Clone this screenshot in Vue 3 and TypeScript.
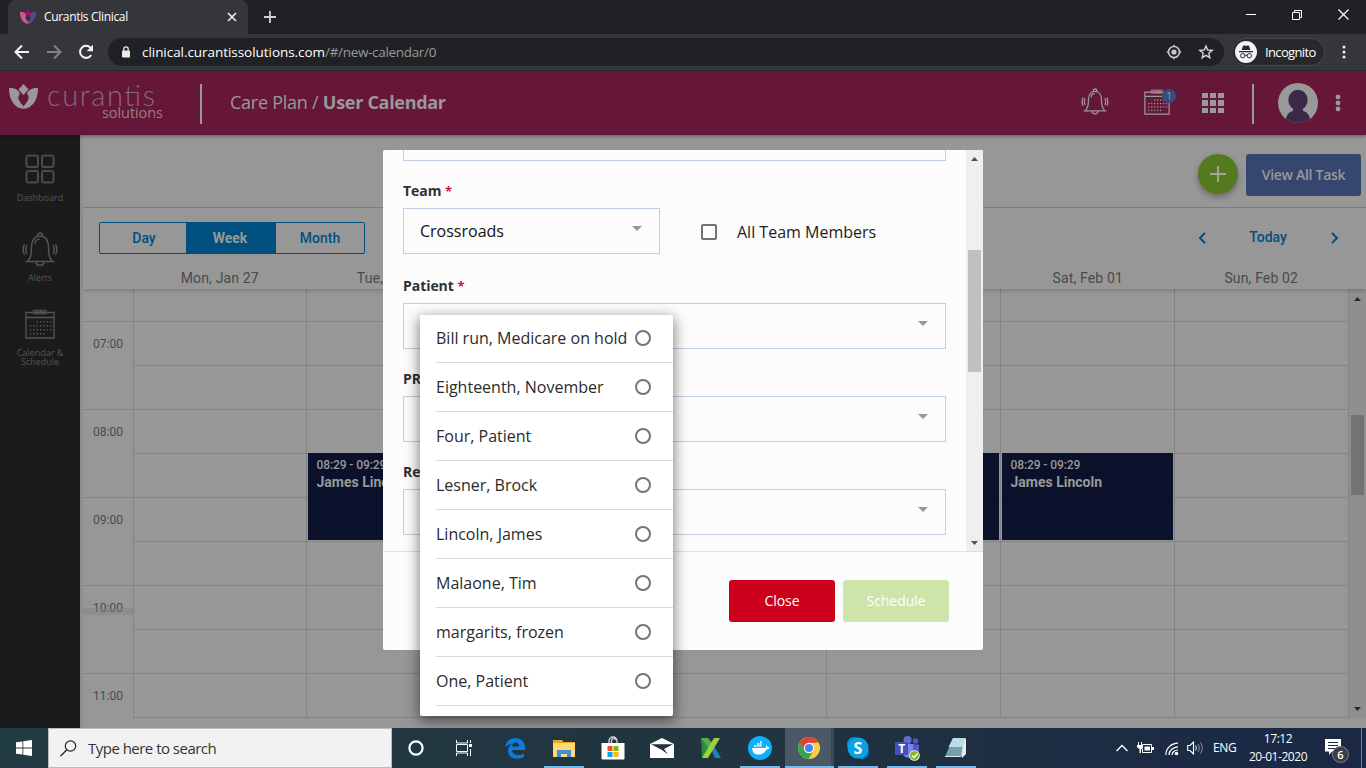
<script setup lang="ts">
interface CalendarEvent {
  day: number
  time: string
  name: string
}

const days: string[] = ['Mon, Jan 27', 'Tue, Jan 28', 'Wed, Jan 29', 'Thu, Jan 30', 'Fri, Jan 31', 'Sat, Feb 01', 'Sun, Feb 02']
const hours: string[] = ['07:00', '08:00', '09:00', '10:00', '11:00']
const events: CalendarEvent[] = [1, 4, 5].map((day) => ({ day, time: '08:29 - 09:29', name: 'James Lincoln' }))
const patients: string[] = [
  'Bill run, Medicare on hold',
  'Eighteenth, November',
  'Four, Patient',
  'Lesner, Brock',
  'Lincoln, James',
  'Malaone, Tim',
  'margarits, frozen',
  'One, Patient',
]
const eventOn = (day: number): CalendarEvent | undefined => events.find((e) => e.day === day)
const dotRows: number[][] = [[3, 4, 5, 6, 7], [1, 2, 3, 4, 5, 6, 7], [1, 2, 3, 4, 5, 6, 7], [1, 2, 3, 4, 5]]
</script>

<template>
  <div class="screen">
    <div class="tabstrip">
      <div class="tab">
        <svg class="favicon" width="16" height="14" viewBox="0 0 16 14">
          <path d="M0 2c4-.5 6 1 6.300 3.500C5 7 5 9 8 11.500V14C3 13 0 9 0 2z" fill="#d4588c" />
          <path d="M16 2c-4-.5-6 1-6.300 3.500C11 7 11 9 8 11.500V14c5-1 8-5 8-12z" fill="#5c4583" />
          <path d="M8 0l3 3-3 3-3-3z" fill="#c0006a" />
        </svg>
        <span class="tab-title">Curantis Clinical</span>
        <svg class="tab-close" width="10" height="10" viewBox="0 0 10 10"><path d="M1 1l8 8M9 1l-8 8" stroke="#e8eaed" stroke-width="1.7" /></svg>
      </div>
      <svg class="newtab" width="12" height="12" viewBox="0 0 12 12"><path d="M6 0v12M0 6h12" stroke="#ced0d3" stroke-width="1.8" /></svg>
      <div class="window-controls">
        <svg width="10" height="11" viewBox="0 0 10 11"><path d="M0 5.500h10" stroke="#fff" /></svg>
        <svg width="10" height="10" viewBox="0 0 10 10"><path d="M.5 2.500h7v7h-7zM2.500 2.500v-2h7v7h-2" fill="none" stroke="#fff" /></svg>
        <svg width="11" height="11" viewBox="0 0 11 11"><path d="M.5.5l10 10M10.500.5l-10 10" stroke="#fff" stroke-width="1.200" /></svg>
      </div>
    </div>

    <div class="toolbar">
      <svg class="nav-icon" width="16" height="16" viewBox="0 0 16 16"><path d="M15 8H2M8 1.500L1.500 8 8 14.500" fill="none" stroke="#f1f3f4" stroke-width="2" /></svg>
      <svg class="nav-icon" width="16" height="16" viewBox="0 0 16 16"><path d="M1 8h13M8 1.500L14.500 8 8 14.500" fill="none" stroke="#808386" stroke-width="2" /></svg>
      <svg class="nav-icon" width="16" height="16" viewBox="0 0 16 16">
        <path d="M13.200 11A6 6 0 1 1 12.500 3.800" fill="none" stroke="#f1f3f4" stroke-width="2" />
        <path d="M15 .8v6.400H8.600z" fill="#f1f3f4" />
      </svg>
      <div class="omnibox">
        <svg width="10" height="12" viewBox="0 0 10 12"><rect x="1" y="4.500" width="8" height="7" rx="1" fill="#e8eaed" /><path d="M2.800 5V3a2.200 2.200 0 0 1 4.400 0v2" fill="none" stroke="#e8eaed" stroke-width="1.300" /></svg>
        <span class="url"><b>clinical.curantissolutions.com</b>/#/new-calendar/0</span>
        <svg class="omni-target" width="16" height="16" viewBox="0 0 16 16">
          <circle cx="8" cy="8" r="5.500" fill="none" stroke="#c5c7ca" stroke-width="1.600" /><circle cx="8" cy="8" r="2.600" fill="#c5c7ca" />
          <path d="M8 .8v2M8 13.200v2M.8 8h2M13.200 8h2" stroke="#c5c7ca" stroke-width="1.500" />
        </svg>
        <svg width="16" height="16" viewBox="0 0 16 16"><path d="M8 2l1.700 4 4.500.4-3.400 2.900 1 4.400L8 11.400l-3.800 2.300 1-4.400L1.800 6.400 6.300 6z" fill="none" stroke="#d3d5d8" stroke-width="1.400" /></svg>
      </div>
      <div class="incognito">
        <svg width="22" height="22" viewBox="0 0 22 22">
          <circle cx="11" cy="11" r="11" fill="#f1f3f4" />
          <path d="M4 10h14v1.200H4zM6.500 9l1.700-4.500h1.600L11 5l1.200-.5h1.600L15.500 9z" fill="#2a2b2e" />
          <circle cx="7.700" cy="14.700" r="2.200" fill="none" stroke="#2a2b2e" /><circle cx="14.300" cy="14.700" r="2.200" fill="none" stroke="#2a2b2e" /><path d="M9.800 14.300h2.400" stroke="#2a2b2e" />
        </svg>
        <span>Incognito</span>
      </div>
      <svg class="menu-dots" width="4" height="14" viewBox="0 0 4 14"><circle cx="2" cy="2" r="1.500" fill="#f1f3f4" /><circle cx="2" cy="7" r="1.500" fill="#f1f3f4" /><circle cx="2" cy="12" r="1.500" fill="#f1f3f4" /></svg>
    </div>

    <div class="page">
      <header class="app-header">
        <svg class="logo" width="160" height="44" viewBox="0 0 160 44">
          <path d="M0 4c6-.5 10 2 11 6-3 2-2 7 3.500 12v3C6 24 0 17 0 4z" fill="#999" />
          <path d="M29 4c-6-.5-10 2-11 6 3 2 2 7-3.500 12v3C23 24 29 17 29 4z" fill="#999" />
          <path d="M14.500 0l5 5.500-5 5.500-5-5.500z" fill="#999" />
          <text x="38" y="22" class="logo-name" textLength="108">curantis</text>
          <text x="93" y="34" class="logo-sub" textLength="61">solutions</text>
        </svg>
        <div class="rule"></div>
        <h1>Care Plan / <b>User Calendar</b></h1>
        <svg class="hd-bell" width="26" height="28" viewBox="0 0 34 36">
          <g fill="none" stroke="#999" stroke-width="1.700">
            <path d="M4 29.500c4-3 4.500-7 4.500-14C8.500 8 12 4 17 4s8.500 4 8.500 11.500c0 7 .5 11 4.500 14zM13 30.500c1 4 7 4 8 0M14.500 4c0-4 5-4 5 0M12 12c0-3 2-5 4.500-5M4 13c-1.300 3-1.300 6 0 9M1.200 12c-1.300 3.500-1.300 7.500 0 11M30 13c1.300 3 1.300 6 0 9M32.800 12c1.300 3.500 1.300 7.500 0 11" />
          </g>
        </svg>
        <div class="hd-cal">
          <svg width="26" height="26" viewBox="0 0 30 30">
            <path d="M1 3.500h28V29H1zM1 8.500h28" fill="none" stroke="#999" stroke-width="1.400" />
            <g fill="none" stroke="#999" stroke-width="1"><circle v-for="n in 5" :key="n" :cx="7 + n * 2.600" cy="3" r="2" /></g>
            <g fill="#999"><template v-for="(row, r) in dotRows" :key="r"><rect v-for="c in row" :key="c" :x="1.400 + c * 3.400" :y="12 + r * 4" width="1.500" height="1.500" /></template></g>
          </svg>
          <span class="count">1</span>
        </div>
        <div class="hd-grid"><i v-for="n in 9" :key="n"></i></div>
        <div class="rule rule-right"></div>
        <svg class="avatar" width="40" height="40" viewBox="0 0 40 40">
          <defs><clipPath id="face"><circle cx="20" cy="20" r="20" /></clipPath></defs>
          <g clip-path="url(#face)"><rect width="40" height="40" fill="#999" /><ellipse cx="20" cy="17" rx="9.700" ry="10.300" fill="#3a2947" /><path d="M15 24h10v4c5 1 7 5 8 12H7c1-7 3-11 8-12z" fill="#3a2947" /></g>
        </svg>
        <svg class="hd-dots" width="6" height="18" viewBox="0 0 6 18"><circle cx="3" cy="3" r="2.400" fill="#999" /><circle cx="3" cy="9" r="2.400" fill="#999" /><circle cx="3" cy="15" r="2.400" fill="#999" /></svg>
      </header>

      <div class="workspace">
        <nav class="sidebar">
          <div class="side-item">
            <svg width="30" height="30" viewBox="0 0 30 30"><g fill="none" stroke="#4b4b4b" stroke-width="2"><rect x="1.500" y="1.500" width="11.500" height="11.500" rx="2" /><rect x="17" y="1.500" width="11.500" height="11.500" rx="2" /><rect x="1.500" y="17" width="11.500" height="11.500" rx="2" /><rect x="17" y="17" width="11.500" height="11.500" rx="2" /></g></svg>
            <span>Dashboard</span>
          </div>
          <div class="side-item alerts">
            <svg width="36" height="36" viewBox="0 0 36 36">
              <path d="M5 29.500c4-3 4.500-7 4.500-14C9.500 8 13 4 18 4s8.500 4 8.500 11.500c0 7 .5 11 4.500 14zM14 30.500c1 4 7 4 8 0M15.500 4c0-4 5-4 5 0M13 12c0-3 2-5 4.500-5M5 13c-1.500 3-1.500 6 0 9M2.500 12c-1.700 3.500-1.700 7.500 0 11M31 13c1.500 3 1.500 6 0 9M33.500 12c1.700 3.500 1.700 7.500 0 11" fill="none" stroke="#555" stroke-width="1.500" />
            </svg>
            <span>Alerts</span>
          </div>
          <div class="side-item schedule">
            <svg width="30" height="30" viewBox="0 0 30 30">
              <path d="M1 3.500h28V29H1zM1 8.500h28" fill="none" stroke="#555" stroke-width="1.300" />
              <g fill="none" stroke="#555" stroke-width="1"><circle v-for="n in 5" :key="n" :cx="7 + n * 2.600" cy="3" r="2" /></g>
              <g fill="#555"><template v-for="(row, r) in dotRows" :key="r"><rect v-for="c in row" :key="c" :x="1.400 + c * 3.400" :y="12 + r * 4" width="1.500" height="1.500" /></template></g>
            </svg>
            <span>Calendar &amp;<br />Schedule</span>
          </div>
        </nav>

        <main class="content">
          <div class="action-bar">
            <button class="add"><svg width="16" height="16" viewBox="0 0 16 16"><path d="M8 0v16M0 8h16" stroke="#a3a39d" stroke-width="2" /></svg></button>
            <button class="view-all">View All Task</button>
          </div>
          <div class="cal-head">
            <div class="cal-nav">
              <div class="segments"><span>Day</span><span class="on">Week</span><span>Month</span></div>
              <svg class="prev" width="8" height="12" viewBox="0 0 8 12"><path d="M7 1L2 6l5 5" fill="none" stroke="#00507f" stroke-width="2" /></svg>
              <b>Today</b>
              <svg width="8" height="12" viewBox="0 0 8 12"><path d="M1 1l5 5-5 5" fill="none" stroke="#00507f" stroke-width="2" /></svg>
            </div>
            <div class="day-names"><span v-for="d in days" :key="d">{{ d }}</span></div>
          </div>
          <div class="cal-body">
            <div class="times">
              <div class="stub"></div>
              <div v-for="h in hours" :key="h" class="hour">{{ h }}</div>
              <div class="now"></div>
            </div>
            <div class="columns">
              <div v-for="(d, i) in days" :key="d" class="column">
                <div class="stub"></div>
                <div v-for="n in 9" :key="n" class="half"></div>
                <div v-if="eventOn(i)" class="event"><span>{{ eventOn(i)?.time }}</span><b>{{ eventOn(i)?.name }}</b></div>
              </div>
            </div>
            <div class="cal-scroll">
              <svg width="7" height="4" viewBox="0 0 7 4"><path d="M0 4l3.500-4L7 4z" fill="#2c2c2c" /></svg>
              <div class="thumb"></div>
              <svg width="7" height="4" viewBox="0 0 7 4"><path d="M0 0l3.500 4L7 0z" fill="#2c2c2c" /></svg>
            </div>
          </div>
        </main>
      </div>

      <section class="modal">
        <div class="modal-body">
          <div class="form">
            <div class="field cut"></div>
            <div class="label">Team <em>*</em></div>
            <div class="row">
              <div class="field team"><span>Crossroads</span><i class="caret"></i></div>
              <i class="checkbox"></i>
              <span class="check-label">All Team Members</span>
            </div>
            <div class="label patient">Patient <em>*</em></div>
            <div class="field"><i class="caret"></i></div>
            <div class="label">PR</div>
            <div class="field"><i class="caret"></i></div>
            <div class="label">Re</div>
            <div class="field"><i class="caret"></i></div>
          </div>
          <div class="modal-scroll">
            <svg width="7" height="4" viewBox="0 0 7 4"><path d="M0 4l3.500-4L7 4z" fill="#505050" /></svg>
            <div class="thumb"></div>
            <svg width="7" height="4" viewBox="0 0 7 4"><path d="M0 0l3.500 4L7 0z" fill="#505050" /></svg>
          </div>
        </div>
        <footer class="modal-foot">
          <button class="close">Close</button>
          <button class="submit">Schedule</button>
        </footer>
      </section>

      <div class="popover">
        <div v-for="p in patients" :key="p" class="option"><span>{{ p }}</span><i></i></div>
      </div>
    </div>

    <div class="taskbar">
      <div class="start"><svg width="16" height="16" viewBox="0 0 16 16"><path d="M0 2.300L6.500 1.400v6.100H0zM7.300 1.200L16 0v7.500H7.300zM0 8.400h6.500v6.200L0 13.700zM7.300 8.400H16V16l-8.700-1.200z" fill="#fff" /></svg></div>
      <div class="search">
        <svg width="17" height="17" viewBox="0 0 17 17"><circle cx="10.500" cy="6" r="5.200" fill="none" stroke="#222" stroke-width="1.200" /><path d="M6.800 9.800L.5 16.300" stroke="#222" stroke-width="1.300" /></svg>
        <span>Type here to search</span>
      </div>
      <div class="slot"><svg width="16" height="16" viewBox="0 0 16 16"><circle cx="8" cy="8" r="6.600" fill="none" stroke="#fff" stroke-width="2.200" /></svg></div>
      <div class="slot"><svg width="16" height="16" viewBox="0 0 16 16"><path d="M.5 0v3h11V0M.5 16v-3h11v3M.5 4.500h11v7H.5zM14.500 0v3M14.500 9v7" fill="none" stroke="#fff" /><rect x="13" y="4" width="3" height="3" fill="#fff" /></svg></div>
      <div class="apps">
        <div class="app"><svg width="20" height="22" viewBox="0 0 20 22"><path d="M0 10C1 4 5 1 10 1c6 0 10 4 10 9v3H7c0 3 3 5 6 5 2 0 4-.5 6-1.500V20c-2 1-4.500 1.700-7 1.700-5 0-9-3-9-8 0-3 1.500-5 4-6.500C4.500 7.500 2 8 0 10zm7-.5h7C14 7 13 5.500 10.800 5.500S7.500 7 7 9.500z" fill="#0d7ad9" fill-rule="evenodd" /></svg></div>
        <div class="app open"><svg width="22" height="19" viewBox="0 0 22 19"><path d="M0 1h9l1.500 2H22v15H0z" fill="#e9a820" /><path d="M0 4h22v14H0z" fill="#ffd975" /><path d="M4 18v-7h14v7h-4v-3H8v3z" fill="#3f8fd8" /></svg></div>
        <div class="app"><svg width="24" height="24" viewBox="0 0 24 24"><path d="M8 8V5a4 4 0 0 1 8 0v3M10.500 7V4a3 3 0 0 1 5 0" fill="none" stroke="#ddd" stroke-width="1.300" /><path d="M.5 7h23v15.500a1 1 0 0 1-1 1h-21a1 1 0 0 1-1-1z" fill="#fff" /><path d="M6.500 10h5v5h-5z" fill="#f25022" /><path d="M12.500 10h5v5h-5z" fill="#7fba00" /><path d="M6.500 16h5v5h-5z" fill="#00a4ef" /><path d="M12.500 16h5v5h-5z" fill="#ffb900" /></svg></div>
        <div class="app"><svg width="24" height="20" viewBox="0 0 24 20"><path d="M12 0l12 6v14H0V6z" fill="#fff" /><path d="M1 6.300h22L14 11l4 5.500L12 12z" fill="#1f3342" /></svg></div>
        <div class="app"><svg width="22" height="22" viewBox="0 0 22 22"><path d="M1 1h7v20H2z" fill="#2d8c3e" /><path d="M1 1h7l6 7-3 6z" fill="#51ae48" /><path d="M11 12l3-3 7 12h-6z" fill="#1785b5" /><path d="M14 1h6L8 21H2z" fill="#a2cf3a" /></svg></div>
        <div class="app open"><svg width="24" height="24" viewBox="0 0 24 24"><circle cx="12" cy="12" r="12" fill="#0db0fa" /><path d="M4 12h13c1 0 1-2 1-3 1 .5 1.500 1.500 1.500 2.200 1-.2 2 0 2 .3-.5 1.500-2 2-3 2-2 4-5 5-8 5-4 0-6-2-6.500-6.500z" fill="#fff" /><path d="M6 10h8M9 8h5M12 6h2" stroke="#fff" stroke-width="1.700" stroke-dasharray="2 .5" /></svg></div>
        <div class="app open active"><svg width="22" height="22" viewBox="0 0 22 22"><circle cx="11" cy="11" r="11" fill="#ffcd40" /><path d="M1.500 5.500A11 11 0 0 1 20.500 5.500L11 6 6.500 14z" fill="#e34133" /><path d="M1.500 5.500A11 11 0 0 0 10.500 22L15.500 13.500 6.500 14z" fill="#2ea853" /><circle cx="11" cy="11" r="5.200" fill="#fff" /><circle cx="11" cy="11" r="4.100" fill="#4285f4" /></svg></div>
        <div class="app open"><svg width="24" height="24" viewBox="0 0 24 24"><circle cx="8" cy="8" r="7" fill="#1687d5" /><circle cx="16" cy="16" r="7" fill="#087ad0" /><circle cx="12" cy="12" r="10.500" fill="#08a3e4" /><text x="7.500" y="17.500" fill="#fff" class="app-letter">S</text></svg></div>
        <div class="app open"><svg width="26" height="26" viewBox="0 0 26 26"><circle cx="13.500" cy="5" r="4" fill="#656bd2" /><circle cx="21.500" cy="6" r="2.700" fill="#5159c9" /><path d="M9 9h11v10c0 5-10 5-11 0z" fill="#7b83eb" /><path d="M19 9.500h6v7c0 3-3 4-6 3z" fill="#5159c9" /><rect x="1" y="7" width="13" height="13" rx="1" fill="#4550b7" /><text x="4.200" y="18" fill="#fff" class="app-small">T</text><circle cx="20.500" cy="20.500" r="5.300" fill="#fff" /><circle cx="20.500" cy="20.500" r="4.500" fill="#82b91f" /><path d="M18 20.500l2 2 3.500-4" fill="none" stroke="#fff" stroke-width="1.300" /></svg></div>
        <div class="app open"><svg width="24" height="22" viewBox="0 0 24 22"><path d="M12 1h9l1 1 0 15-4 4z" fill="#e6ecec" /><path d="M9 1h11l-3 19H1z" fill="#6fa3ad" /><path d="M9 1h11l-1.400 9H4.500z" fill="#b9dde2" /><path d="M1 19.500h15.500" stroke="#e3e9ea" fill="none" /></svg></div>
      </div>
      <div class="tray">
        <svg class="tray-up" width="12" height="8" viewBox="0 0 12 8"><path d="M.5 7L6 1.500 11.500 7" fill="none" stroke="#fff" stroke-width="1.300" /></svg>
        <svg class="tray-battery" width="17" height="12" viewBox="0 0 17 12"><path d="M5.500 2.500h9v8h-9v-4" fill="none" stroke="#fff" /><path d="M7.500 4.500h5.500v4H7.500zM15 5h2v3h-2zM0 3h6v2.500L4.500 7H4v4H2.500V7L0 5.500zM1 0h1v3H1zM4 0h1v3H4z" fill="#fff" /></svg>
        <svg class="tray-wifi" width="14" height="14" viewBox="0 0 14 14"><g fill="none" stroke="#fff" stroke-width="1.200"><path d="M.8 13C1 6 6 1.500 13 1.200M4 13c.2-4.500 4-8 9-8.200M7 13c.2-2.500 2.500-5 6-5" /></g><circle cx="11.500" cy="11.500" r="1.800" fill="#fff" /></svg>
        <svg class="tray-sound" width="17" height="14" viewBox="0 0 17 14"><path d="M.7 4.500H3L6.500 1v12L3 9.500H.7z" fill="none" stroke="#fff" stroke-width="1.100" /><path d="M8.500 4.500c1 1.500 1 3.500 0 5" fill="none" stroke="#fff" /><path d="M11 3c1.700 2.500 1.700 5.500 0 8M13.500 1.500c2.300 3.500 2.300 7.500 0 11" fill="none" stroke="#8793a3" /></svg>
        <span class="lang">ENG</span>
        <div class="clock"><span>17:12</span><span>20-01-2020</span></div>
        <div class="notice">
          <svg width="16" height="16" viewBox="0 0 16 16"><path d="M0 0h16v12.500H7L4 16v-3.500H0z" fill="#fff" /><path d="M3 3.500h10M3 6.500h10M3 9.500h7" stroke="#1b2a42" stroke-width="1.100" /></svg>
          <span>6</span>
        </div>
        <i class="peek"></i>
      </div>
    </div>
  </div>
</template>

<style>
html,
body {
  overflow: hidden;
}
</style>

<style scoped>
* { box-sizing: border-box; }
svg { display: block; flex: none; overflow: visible; }
button { border: 0; padding: 0; font: inherit; }
.screen { width: 1366px; height: 768px; display: flex; flex-direction: column; font-family: 'Open Sans', 'Noto Sans', sans-serif; overflow: hidden; }

.tabstrip { height: 34px; background: #202124; display: flex; align-items: flex-start; color: #fff; flex: none; }
.tab { width: 240px; height: 34px; margin-left: 8px; padding: 0 11px 0 12px; background: #35363a; border-radius: 8px 8px 0 0; display: flex; align-items: center; font-size: 12px; }
.tab-title { margin-left: 8px; padding-bottom: 2px; flex: 1; letter-spacing: -0.33px; white-space: nowrap; }
.newtab { margin: 11px 0 0 16px; }
.window-controls { margin: 9px 17px 0 auto; display: flex; align-items: center; gap: 36px; }
.toolbar { height: 37px; background: #35363a; border-bottom: 1px solid #28292b; display: flex; align-items: center; color: #fff; flex: none; padding-left: 14px; }
.nav-icon { margin-right: 16px; }
.omnibox { width: 1116px; height: 28px; margin-left: -2px; padding: 0 10px 0 13px; border-radius: 14px; background: #202124; display: flex; align-items: center; font-size: 14px; }
.url { margin-left: 11px; padding-bottom: 1px; flex: 1; color: #96999d; letter-spacing: -0.32px; font-size: 13.500px; white-space: nowrap; }
.url b { font-weight: 400; color: #fff; letter-spacing: -0.05px; }
.omni-target { margin-right: 16px; }
.incognito { width: 92px; height: 28px; margin-left: 9px; padding-left: 2px; border: 1px solid #46474b; border-left: 0; border-radius: 14px; background: #27282b; display: flex; align-items: center; font-size: 13px; }
.incognito span { margin-left: 8px; padding-bottom: 1px; letter-spacing: -0.65px; }
.menu-dots { margin-left: 17px; }

.page { position: relative; height: 657px; overflow: hidden; display: flex; flex-direction: column; flex: none; }
.app-header { height: 64px; background: #661637; display: flex; align-items: center; color: #999; flex: none; z-index: 1; box-shadow: 0 1px 4px rgba(0, 0, 0, 0.4); }
.logo { margin: 6px 0 0 9px; }
.logo-name { font: 300 29px Lato, sans-serif; fill: #86687a; }
.logo-sub { font: 400 14.500px 'Open Sans', sans-serif; fill: #93808a; }
.rule { width: 2px; height: 40px; background: #999; margin: 2px 0 0 31px; }
.app-header h1 { margin: -3px 0 0 28px; font-size: 18px; font-weight: 400; letter-spacing: -0.25px; white-space: nowrap; }
.app-header h1 b { font-weight: 700; letter-spacing: -0.3px; }
.hd-bell { margin: -2px 0 0 auto; }
.hd-cal { position: relative; margin: -2px 0 0 36px; }
.count { position: absolute; left: 18px; top: 0; width: 14px; height: 14px; border-radius: 50%; background: #374b7d; font-size: 10px; line-height: 14px; text-align: center; }
.hd-grid { display: grid; grid-template-columns: repeat(3, 6px); grid-auto-rows: 5.500px; gap: 2px; margin-left: 32px; }
.hd-grid i { background: #999; }
.rule-right { margin-left: 28px; }
.avatar { margin-left: 24px; }
.hd-dots { margin: -1px 25px 0 17px; }

.workspace { flex: 1; display: flex; min-height: 0; }
.sidebar { width: 80px; background: #1b1b1b; display: flex; flex-direction: column; align-items: center; padding-top: 19px; font-size: 9px; line-height: 9px; color: #555; text-align: center; }
.side-item { display: flex; flex-direction: column; align-items: center; gap: 9px; height: 78px; }
.side-item.alerts { height: 77px; gap: 5px; }
.content { flex: 1; background: #979797; border-left: 3px solid #8e8e8e; display: flex; flex-direction: column; min-width: 0; }
.action-bar { height: 73px; border-bottom: 1px solid #7c7c7c; display: flex; justify-content: flex-end; padding: 19px 5px 0 0; gap: 8px; }
.add { width: 40px; height: 40px; border-radius: 50%; background: #54791e; display: flex; align-items: center; justify-content: center; box-shadow: 0 3px 6px rgba(0, 0, 0, 0.3); }
.view-all { width: 115px; height: 42px; padding-bottom: 2px; border-radius: 3px; background: #35466f; color: #999; font-size: 14px; font-weight: 600; letter-spacing: -0.3px; }
.cal-head { height: 81px; font-family: Roboto, sans-serif; background: #979797; box-shadow: 0 3px 4px -1px rgba(0, 0, 0, 0.18); z-index: 1; flex: none; }
.cal-nav { height: 59px; display: flex; align-items: center; padding: 0 27px 0 16px; color: #00507f; font-size: 14px; }
.cal-nav b { font-weight: 500; width: 127px; text-align: center; padding: 0 0 2px 1px; }
.segments { width: 266px; height: 32px; display: grid; grid-template-columns: 86px 90px 88px; border: 1px solid #00507f; border-radius: 2px; margin-right: auto; line-height: 30px; text-align: center; font-weight: 500; }
.segments span:first-child { padding-left: 2px; }
.segments .on { background: #00507f; color: #999; font-weight: 700; padding-right: 2px; }
.prev { margin-right: -2px; }
.day-names { display: flex; padding: 3px 18px 0 50px; font-size: 14px; line-height: 17px; color: #494949; text-align: center; letter-spacing: 0.15px; }
.day-names span { flex: 1; }
.cal-body { height: 429px; display: flex; font-family: Roboto, sans-serif; }
.times { position: relative; width: 50px; color: #4a4a4a; font-size: 12px; text-align: center; overflow: hidden; }
.stub { height: 33px; border-bottom: 1px solid #838383; }
.hour { height: 88px; line-height: 44px; border-bottom: 1px solid #838383; }
.now { position: absolute; left: 0; top: 319px; width: 50px; height: 7px; background: rgba(128, 128, 128, 0.45); }
.columns { flex: 1; display: grid; grid-template-columns: 173px 173px 174px 173px 174px 174px 174px; border-right: 1px solid #838383; }
.column { position: relative; border-left: 1px solid #838383; min-width: 0; }
.half { height: 44px; border-bottom: 1px solid #838383; }
.event { position: absolute; left: 1px; right: 1px; top: 164px; height: 87px; padding: 4px 8px 4px 8.500px; background: #0b102b; color: #999; display: flex; flex-direction: column; font-size: 12px; line-height: 16px; white-space: nowrap; overflow: hidden; }
.event span { font-weight: 500; letter-spacing: -0.1px; }
.event b { font-size: 14px; line-height: 18px; font-weight: 700; }
.cal-scroll, .modal-scroll { width: 17px; display: flex; flex-direction: column; align-items: center; justify-content: space-between; flex: none; }
.cal-scroll { background: #8f8f8f; padding: 8px 0 7px; }
.cal-scroll .thumb { width: 13px; height: 80px; margin-top: auto; margin-bottom: 212px; background: #737373; }

.modal { position: absolute; left: 383px; top: 79px; z-index: 2; width: 600px; height: 500px; background: #fcfcfc; border-radius: 2px; overflow: hidden; display: flex; flex-direction: column; color: #333; }
.modal-body { height: 401px; display: flex; }
.form { flex: 1; padding: 0 20px; }
.field { height: 46px; border: 1px solid #bfcfe1; display: flex; justify-content: flex-end; font-size: 16px; line-height: 44px; color: #111; background: #fcfcfc; }
.field.cut { height: 11px; border-top: 0; }
.field.team { width: 257px; justify-content: space-between; }
.field.team span { margin-left: 16px; }
.caret { width: 0; height: 0; border: 5px solid transparent; border-top-color: #999; border-bottom: 0; margin: 17px 17px 0 0; }
.label { margin: 20px 0 7px; height: 20px; line-height: 20px; font-size: 14px; font-weight: 700; color: #303030; letter-spacing: -0.05px; white-space: nowrap; }
.label.patient { margin-top: 22px; }
.label em { color: #d2133a; font-style: normal; font-size: 13px; }
.row { display: flex; align-items: center; }
.checkbox { width: 16px; height: 16px; margin: 2px 20px 0 41px; border: 2px solid #737373; border-radius: 2px; }
.check-label { margin-top: 2px; font-size: 16px; color: #222; }
.modal-scroll { background: #efefef; padding: 7px 0 6px; }
.modal-scroll .thumb { width: 13px; height: 122px; margin: 89px 0 auto; background: #c0c0c0; }
.modal-foot { flex: 1; display: flex; justify-content: flex-end; gap: 8px; padding: 28px 34px 0 0; border-top: 1px solid #e0e0e0; color: #fff; font-size: 14px; }
.modal-foot button { width: 106px; height: 42px; padding-bottom: 2px; border-radius: 3px; color: #fff; letter-spacing: -0.05px; }
.modal-foot .close { background: #cc001b; }
.modal-foot .submit { background: #cde4ab; }

.popover { position: absolute; left: 420px; top: 244px; z-index: 3; width: 253px; height: 401px; background: #fff; border-radius: 2px; overflow: hidden; box-shadow: 0 4px 14px 1px rgba(0, 0, 0, 0.5); font-size: 16px; color: #2b2b2b; }
.option { height: 49px; margin-left: 16px; padding: 0 22px 0 0; border-bottom: 1px solid #dadada; display: flex; align-items: center; justify-content: space-between; white-space: nowrap; }
.option:first-child { height: 48px; padding-bottom: 1px; }
.option i { width: 16px; height: 16px; border: 2px solid #757575; border-radius: 50%; }

.taskbar { height: 40px; background: linear-gradient(90deg, #213b43, #21343f 55%, #1d2d43 78%, #1a2845); display: flex; color: #fff; flex: none; }
.start { width: 48px; display: flex; align-items: center; justify-content: center; }
.search { width: 344px; border: 1px solid #bbb; background: #f2f2f2; color: #333; display: flex; align-items: center; padding-left: 11px; font-size: 15px; }
.search span { margin-left: 11px; letter-spacing: -0.52px; }
.slot { width: 48px; display: flex; align-items: center; justify-content: center; }
.apps { display: flex; gap: 5px; margin-left: 5px; }
.app { width: 44px; display: flex; align-items: center; justify-content: center; position: relative; }
.app.open::after { content: ''; position: absolute; left: 2px; right: 2px; bottom: 0; height: 2px; background: #76b9ed; }
.app.active { background: #4b5966; box-shadow: -2px 0 0 #4b5966, 3px 0 0 #3a4956; }
.app.active::after { left: -2px; right: -3px; }
.app-letter { font: 700 16px 'Open Sans', sans-serif; }
.app-small { font: 700 12px 'Open Sans', sans-serif; }
.tray { display: flex; align-items: center; margin-left: auto; font-size: 12px; }
.tray-up { margin-right: -1px; }
.tray-battery { margin-left: 10px; }
.tray-wifi { margin: 2px 0 0 11px; }
.tray-sound { margin-left: 8px; }
.lang { margin: -1px 0 0 9px; width: 23px; letter-spacing: -0.3px; }
.clock { width: 60px; margin-left: 12px; display: flex; flex-direction: column; align-items: center; line-height: 18px; letter-spacing: -0.45px; white-space: nowrap; }
.notice { position: relative; margin: 0 0 2px 17px; }
.notice span { position: absolute; left: 7px; top: 7px; width: 17px; height: 17px; border-radius: 50%; border: 1px solid #7b8591; background: #3a3d42; font-size: 11px; font-weight: 600; line-height: 15px; text-align: center; }
.peek { width: 1px; height: 40px; margin: 0 4px 0 20px; background: #76808f; }
</style>
